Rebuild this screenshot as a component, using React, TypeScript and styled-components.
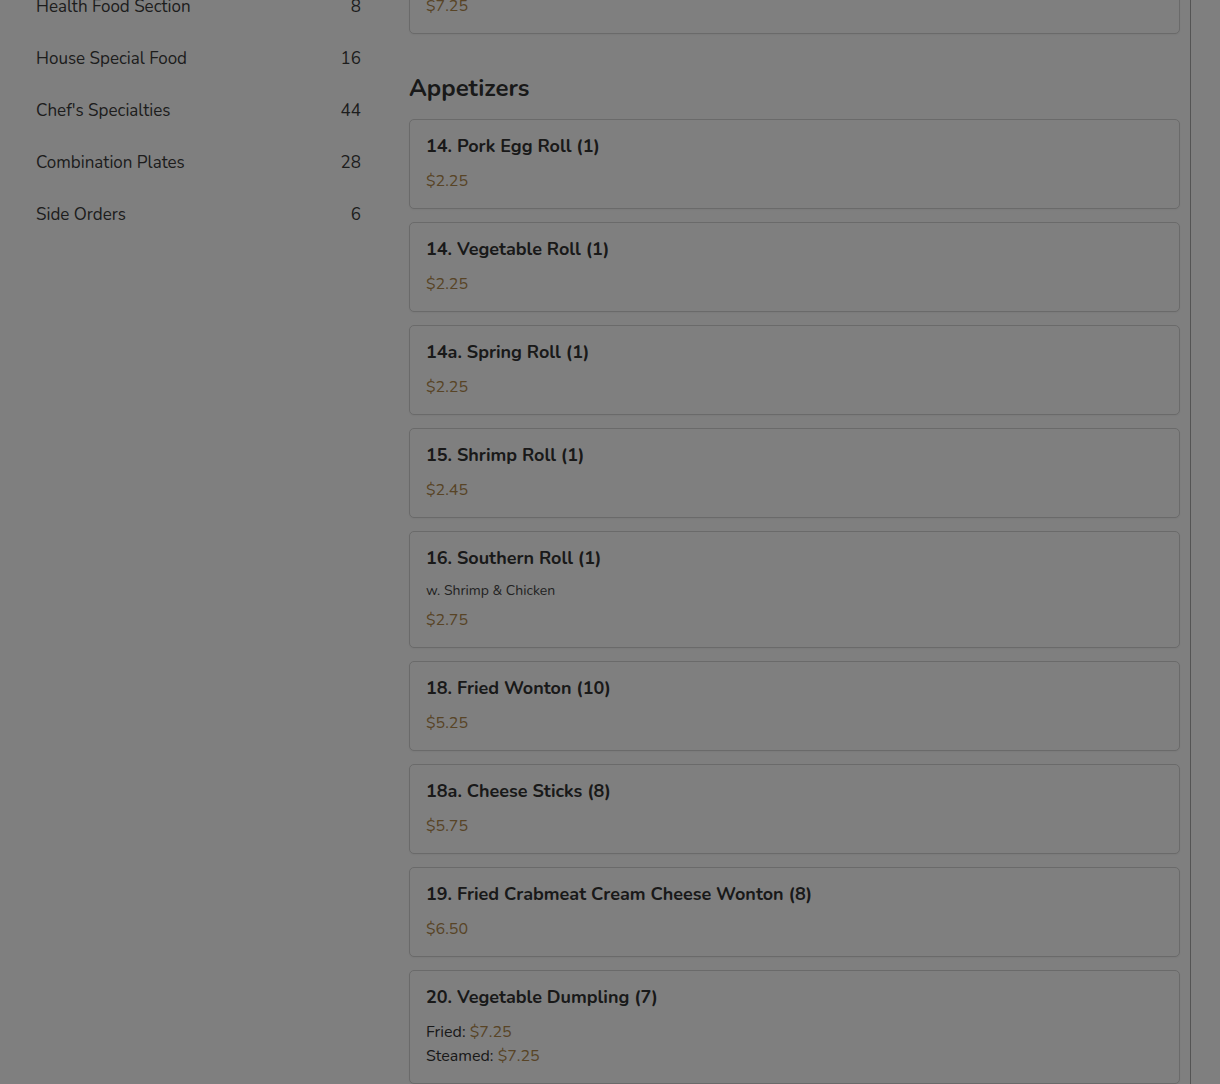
import React from "react";
import styled, { createGlobalStyle } from "styled-components";

const Global = createGlobalStyle`
  html, body { margin: 0; padding: 0; background: #ffffff; }
  body { font-family: "Nunito", "Lato", "Noto Sans", sans-serif; color: #333; overflow: hidden; }
  * { box-sizing: border-box; }
`;

const Page = styled.div`
  display: flex;
  align-items: flex-start;
  padding-left: 36px;
  margin-top: -56px;
  min-height: 1200px;
`;

const Sidebar = styled.nav`
  width: 325px;
  flex: none;
  padding-top: 36px;
  display: flex;
  flex-direction: column;
`;

const NavRow = styled.a`
  display: flex;
  justify-content: space-between;
  align-items: center;
  height: 52px;
  font-size: 17px;
  color: #3a3a3a;
  text-decoration: none;
`;

const Main = styled.main`
  margin-left: 48px;
  width: 782px;
  padding-right: 10px;
  border-right: 1px solid #a8a8a8;
  min-height: 1300px;
  display: flex;
  flex-direction: column;
`;

const Section = styled.section`
  display: flex;
  flex-direction: column;
  gap: 13px;
`;

const Heading = styled.h2`
  margin: 38px 0 15px;
  font-size: 24px;
  line-height: 32px;
  font-weight: 700;
  color: #333;
`;

const Card = styled.div`
  border: 1px solid #d4d4d4;
  border-radius: 5px;
  padding: 14px 16px 15px;
  background: #fff;
  box-shadow: 0 1px 2px rgba(0, 0, 0, 0.05);
  display: flex;
  flex-direction: column;
`;

const Title = styled.div`
  font-size: 18px;
  line-height: 24px;
  font-weight: 700;
  color: #333;
  margin-bottom: 11px;
`;

const Desc = styled.div`
  font-size: 14px;
  line-height: 18px;
  color: #444;
  margin-top: 1px;
  margin-bottom: 8px;
`;

const Price = styled.span`
  font-size: 16px;
  line-height: 24px;
  color: #b0884c;
`;

const OptionRow = styled.div`
  font-size: 16px;
  line-height: 24px;
  color: #333;
`;

const Overlay = styled.div`
  position: fixed;
  inset: 0;
  background: rgba(0, 0, 0, 0.5);
  pointer-events: none;
`;

const nav: [string, number][] = [
  ["Health Food Section", 8],
  ["House Special Food", 16],
  ["Chef's Specialties", 44],
  ["Combination Plates", 28],
  ["Side Orders", 6],
];

type Item = { title: string; desc?: string; price?: string; options?: [string, string][] };

const items: Item[] = [
  { title: "14. Pork Egg Roll (1)", price: "$2.25" },
  { title: "14. Vegetable Roll (1)", price: "$2.25" },
  { title: "14a. Spring Roll (1)", price: "$2.25" },
  { title: "15. Shrimp Roll (1)", price: "$2.45" },
  { title: "16. Southern Roll (1)", desc: "w. Shrimp & Chicken", price: "$2.75" },
  { title: "18. Fried Wonton (10)", price: "$5.25" },
  { title: "18a. Cheese Sticks (8)", price: "$5.75" },
  { title: "19. Fried Crabmeat Cream Cheese Wonton (8)", price: "$6.50" },
  {
    title: "20. Vegetable Dumpling (7)",
    options: [
      ["Fried", "$7.25"],
      ["Steamed", "$7.25"],
    ],
  },
  {
    title: "21. Pork Dumpling (7)",
    options: [
      ["Fried", "$7.25"],
      ["Steamed", "$7.25"],
    ],
  },
];

const MenuCard = ({ item }: { item: Item }) => (
  <Card>
    <Title>{item.title}</Title>
    {item.desc && <Desc>{item.desc}</Desc>}
    {item.price && <Price>{item.price}</Price>}
    {item.options &&
      item.options.map(([label, p]) => (
        <OptionRow key={label}>
          {label}: <Price>{p}</Price>
        </OptionRow>
      ))}
  </Card>
);

export default function App() {
  return (
    <>
      <Global />
      <Page>
        <Sidebar>
          {nav.map(([name, count]) => (
            <NavRow key={name} href="#">
              <span>{name}</span>
              <span>{count}</span>
            </NavRow>
          ))}
        </Sidebar>
        <Main>
          <Section>
            <MenuCard item={{ title: "H8. Steamed Mixed Vegetables", price: "$7.25" }} />
          </Section>
          <Heading>Appetizers</Heading>
          <Section>
            {items.map((it) => (
              <MenuCard key={it.title} item={it} />
            ))}
          </Section>
        </Main>
      </Page>
      <Overlay />
    </>
  );
}
